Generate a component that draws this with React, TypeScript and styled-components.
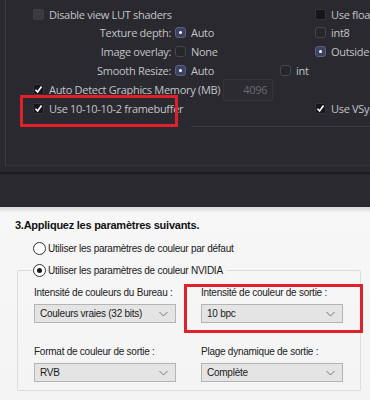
import styled, { createGlobalStyle } from "styled-components";

const Global = createGlobalStyle`
  html, body { margin: 0; padding: 0; }
  body { width: 370px; height: 400px; overflow: hidden; background: #29292f; }
`;

const Page = styled.div`
  width: 370px;
  height: 400px;
  display: flex;
  flex-direction: column;
`;

/* ---------- dark settings panel ---------- */

const Dark = styled.section`
  height: 207px;
  background: #29292f;
  display: flex;
  flex-direction: column;
  font-family: "Open Sans", "Noto Sans", sans-serif;
  font-size: 11px;
  letter-spacing: -0.3px;
  color: #c4c4c8;
`;

const Inner = styled.div`
  position: relative;
  margin-left: 5px;
  height: 166px;
  border-left: 1px solid #3a3a41;
  border-bottom: 1px solid #323238;
  padding: 6px 0 0 27px;
  box-sizing: border-box;
`;

const Grid = styled.div`
  display: grid;
  grid-template-columns: 142px 105px 35px 1fr;
  grid-template-rows: 17px repeat(5, 19px);
  align-items: center;
  white-space: nowrap;
`;

const Cell = styled.div<{ $span?: string; $right?: boolean }>`
  grid-column: ${(p) => p.$span || "auto"};
  display: flex;
  align-items: center;
  justify-content: ${(p) => (p.$right ? "flex-end" : "flex-start")};
  padding-right: ${(p) => (p.$right ? "4px" : "0")};
  gap: 5px;
  min-width: 0;
`;

const Box = styled.span<{ $fill?: boolean; $open?: boolean }>`
  width: 11px;
  height: 11px;
  flex: none;
  border-radius: ${(p) => (p.$open ? "3px" : "2px")};
  box-sizing: border-box;
  border: 1px solid ${(p) => (p.$fill ? "#3e3e43" : p.$open ? "#46464d" : "#34343a")};
  background: ${(p) => (p.$fill ? "#3a3a3f" : p.$open ? "#26262b" : "#17171b")};
  display: flex;
  align-items: center;
  justify-content: center;
`;

const Radio = styled.span<{ $on?: boolean }>`
  width: 11px;
  height: 11px;
  flex: none;
  border-radius: 3px;
  box-sizing: border-box;
  border: 1px solid ${(p) => (p.$on ? "#5a6282" : "#46464d")};
  background: ${(p) => (p.$on ? "#3c4262" : "#26262b")};
  display: flex;
  align-items: center;
  justify-content: center;
  &::after {
    content: "";
    width: 3px;
    height: 3px;
    border-radius: 50%;
    background: ${(p) => (p.$on ? "#ffffff" : "transparent")};
  }
`;

const Check = () => (
  <svg width="11" height="11" viewBox="0 0 11 11">
    <path d="M1.8 5.8 L4.4 8.6 L9.2 1.8" stroke="#ffffff" strokeWidth="2" fill="none" />
  </svg>
);

const NumInput = styled.span`
  margin-left: -2px;
  width: 50px;
  height: 22px;
  box-sizing: border-box;
  border: 1px solid #34343a;
  background: #2b2b31;
  color: #6a6a70;
  display: flex;
  align-items: center;
  justify-content: flex-end;
  padding-right: 5px;
  font-size: 11px;
`;

const Highlight = styled.div`
  position: absolute;
  left: 14px;
  top: 95px;
  width: 158px;
  height: 32px;
  border: 3px solid #e0202a;
  box-sizing: border-box;
`;

const Rule = styled.div`
  position: absolute;
  left: 185px;
  right: 0;
  top: 126px;
  height: 1px;
  background: #3a3a41;
`;

const Divider = styled.div`
  margin-top: 6px;
  height: 2px;
  background: #1c1c20;
`;

/* ---------- light NVIDIA panel ---------- */

const Light = styled.section`
  flex: 1;
  background: linear-gradient(#d6d6d6 0, #f7f7f7 6px, #f4f4f4 100%);
  font-family: "Liberation Sans", Arial, sans-serif;
  font-size: 10px;
  letter-spacing: -0.25px;
  color: #1a1a1a;
  padding: 11px 0 0 15px;
  box-sizing: border-box;
  position: relative;
`;

const Heading = styled.h2`
  margin: 0;
  font-size: 11px;
  font-weight: bold;
  color: #111;
  line-height: 15px;
`;

const Option = styled.div<{ $first?: boolean }>`
  display: flex;
  align-items: center;
  gap: 2px;
  height: 22px;
  margin: ${(p) => (p.$first ? "4px" : "0")} 0 0 18px;
  position: relative;
  z-index: 1;
`;

const OptionLabel = styled.span`
  background: #f4f4f4;
  padding-right: 4px;
`;

const Circle = styled.span<{ $on?: boolean }>`
  width: 11px;
  height: 11px;
  border-radius: 50%;
  border: 1px solid #333;
  background: #fff;
  display: flex;
  align-items: center;
  justify-content: center;
  &::after {
    content: "";
    width: 5px;
    height: 5px;
    border-radius: 50%;
    background: ${(p) => (p.$on ? "#1a1a1a" : "transparent")};
  }
`;

const Group = styled.div`
  margin: -11px 9px 0 2px;
  border: 1px solid #dcdcdc;
  border-radius: 2px;
  padding: 15px 17px 8px 16px;
  display: grid;
  grid-template-columns: 142px 142px;
  column-gap: 25px;
  row-gap: 22px;
`;

const Field = styled.div`
  display: flex;
  flex-direction: column;
  gap: 4px;
`;

const FieldLabel = styled.span`
  color: #222;
  line-height: 14px;
  white-space: nowrap;
`;

const Select = styled.div`
  height: 19px;
  border: 1px solid #b4b4b4;
  background: #e4e4e4;
  display: flex;
  align-items: center;
  justify-content: space-between;
  padding: 0 7px 0 5px;
  box-sizing: border-box;
  white-space: nowrap;
`;

const Chevron = () => (
  <svg width="9" height="6" viewBox="0 0 9 6">
    <path d="M0.5 1 L4.5 5 L8.5 1" stroke="#777" strokeWidth="1" fill="none" />
  </svg>
);

const RedFrame = styled.div`
  position: absolute;
  left: 184px;
  top: 77px;
  width: 179px;
  height: 49px;
  border: 3px solid #e0202a;
  box-sizing: border-box;
  pointer-events: none;
`;

const fields = [
  { label: "Intensité de couleurs du Bureau :", value: "Couleurs vraies (32 bits)" },
  { label: "Intensité de couleur de sortie :", value: "10 bpc" },
  { label: "Format de couleur de sortie :", value: "RVB" },
  { label: "Plage dynamique de sortie :", value: "Complète" },
];

export default function App() {
  return (
    <Page>
      <Global />
      <Dark>
        <Inner>
          <Grid>
            <Cell $span="1 / 3">
              <Box $fill />
              Disable view LUT shaders
            </Cell>
            <Cell $span="4">
              <Box />
              Use float
            </Cell>

            <Cell $right>Texture depth:</Cell>
            <Cell $span="2 / 4">
              <Radio $on />
              Auto
            </Cell>
            <Cell $span="4">
              <Box $open />
              int8
            </Cell>

            <Cell $right>Image overlay:</Cell>
            <Cell $span="2 / 4">
              <Radio />
              None
            </Cell>
            <Cell $span="4">
              <Radio $on />
              Outside
            </Cell>

            <Cell $right>Smooth Resize:</Cell>
            <Cell>
              <Radio $on />
              Auto
            </Cell>
            <Cell $span="3 / 5">
              <Box $open />
              int
            </Cell>

            <Cell $span="1 / 5">
              <Box>
                <Check />
              </Box>
              Auto Detect Graphics Memory (MB)
              <NumInput>4096</NumInput>
            </Cell>

            <Cell $span="1 / 4">
              <Box>
                <Check />
              </Box>
              Use 10-10-10-2 framebuffer
            </Cell>
            <Cell $span="4">
              <Box>
                <Check />
              </Box>
              Use VSync
            </Cell>
          </Grid>
          <Rule />
          <Highlight />
        </Inner>
        <Divider />
      </Dark>
      <Light>
        <Heading>3.Appliquez les paramètres suivants.</Heading>
        <Option $first>
          <Circle />
          <OptionLabel>Utiliser les paramètres de couleur par défaut</OptionLabel>
        </Option>
        <Option>
          <Circle $on />
          <OptionLabel>Utiliser les paramètres de couleur NVIDIA</OptionLabel>
        </Option>
        <Group>
          {fields.map((f) => (
            <Field key={f.label}>
              <FieldLabel>{f.label}</FieldLabel>
              <Select>
                {f.value}
                <Chevron />
              </Select>
            </Field>
          ))}
        </Group>
        <RedFrame />
      </Light>
    </Page>
  );
}
